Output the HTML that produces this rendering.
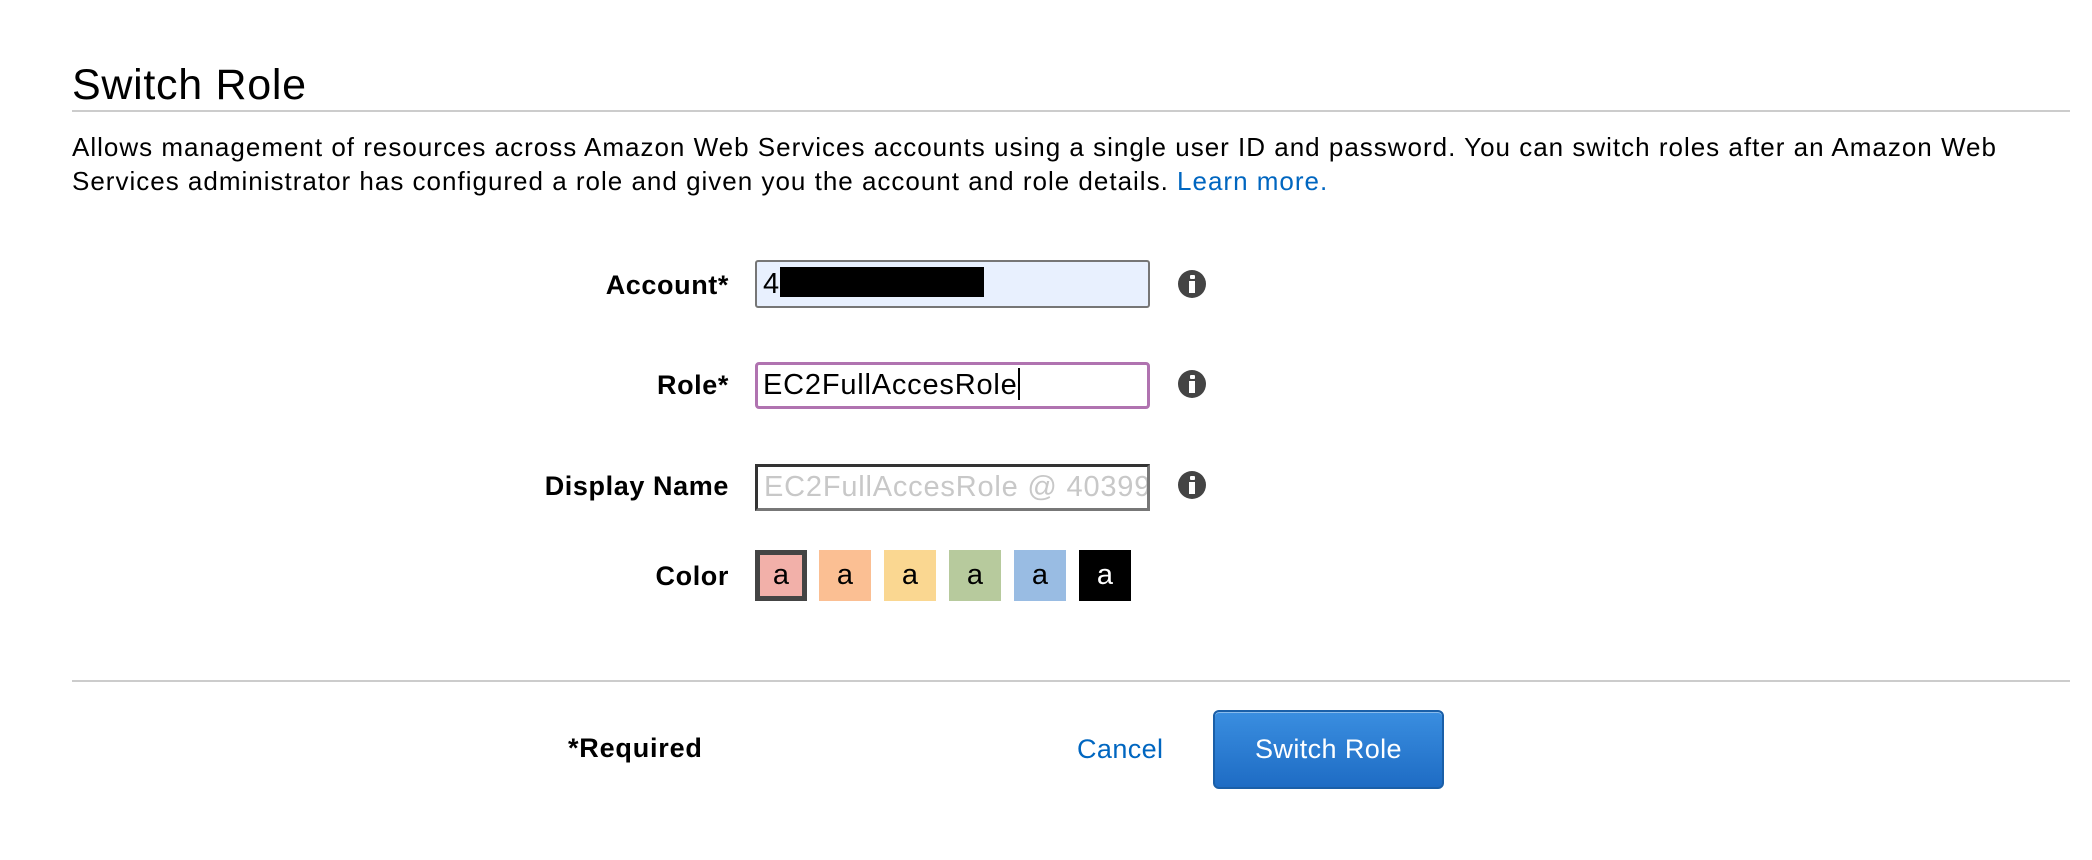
<!DOCTYPE html>
<html><head><meta charset="utf-8">
<style>
body{margin:0;width:2092px;height:860px;background:#fff;font-family:"Liberation Sans",Arial,sans-serif;position:relative;overflow:hidden;color:#000}
.a{position:absolute}
h1{position:absolute;left:72px;top:60px;margin:0;font-size:43px;font-weight:normal;line-height:50px;letter-spacing:0.7px}
.hr{position:absolute;left:72px;width:1998px;height:2px;background:#ccc}
p{position:absolute;left:72px;top:131px;margin:0;font-size:26px;line-height:33.5px;width:2020px;letter-spacing:1px}
p a{color:#0066c0;text-decoration:none}
.lbl{position:absolute;right:1363px;font-size:27px;font-weight:bold;line-height:30px;white-space:nowrap;letter-spacing:0.6px}
.inp{position:absolute;left:755px;width:395px;box-sizing:border-box;font-size:29px;padding-left:6px;overflow:hidden;white-space:nowrap;letter-spacing:0.8px}
.info{position:absolute;left:1178px;width:28px;height:28px;border-radius:50%;background:#444}
.info:before{content:"";position:absolute;left:12px;top:5px;width:5px;height:4px;background:#fff;border-radius:1px}
.info:after{content:"";position:absolute;left:11px;top:11px;width:6px;height:12px;background:#fff}
.sw{position:absolute;top:550px;width:52px;height:51px;font-size:29px;text-align:center;line-height:50px;box-sizing:border-box}
</style></head><body>
<h1>Switch Role</h1>
<div class="hr" style="top:110px"></div>
<p>Allows management of resources across Amazon Web Services accounts using a single user ID and password. You can switch roles after an Amazon Web Services administrator has configured a role and given you the account and role details. <a>Learn more.</a></p>

<div class="lbl" style="top:270px">Account*</div>
<div class="inp" style="top:260px;height:48px;background:#e8f0fe;border:2px solid #767676;border-radius:3px;line-height:44px">4<span style="display:inline-block;width:204px;height:30px;background:#000;vertical-align:-4px"></span></div>
<div class="info" style="top:270px"></div>

<div class="lbl" style="top:370px">Role*</div>
<div class="inp" style="top:362px;height:47px;border:3px solid #b073b0;border-radius:4px;line-height:41px;padding-left:5px">EC2FullAccesRole<span style="display:inline-block;width:2px;height:32px;background:#000;vertical-align:-6px"></span></div>
<div class="info" style="top:370px"></div>

<div class="lbl" style="top:471px">Display Name</div>
<div class="inp" style="top:464px;height:47px;border:3px solid #333;border-right-color:#777;border-bottom-color:#777;line-height:41px;color:#c8c8c8">EC2FullAccesRole @ 40399</div>
<div class="info" style="top:471px"></div>

<div class="lbl" style="top:561px">Color</div>
<div class="sw" style="left:755px;background:#f2b0a9;border:5px solid #444;line-height:41px">a</div>
<div class="sw" style="left:819px;background:#fbbf93">a</div>
<div class="sw" style="left:884px;background:#fad791">a</div>
<div class="sw" style="left:949px;background:#b7ca9d">a</div>
<div class="sw" style="left:1014px;background:#99bce3">a</div>
<div class="sw" style="left:1079px;background:#000;color:#fff">a</div>

<div class="hr" style="top:680px"></div>
<div class="a" style="left:568px;top:733px;font-size:27px;font-weight:bold;letter-spacing:0.8px">*Required</div>
<div class="a" style="left:1077px;top:734px;font-size:27px;color:#0066c0;letter-spacing:0.4px">Cancel</div>
<div class="a" style="left:1213px;top:710px;width:231px;height:79px;box-sizing:border-box;border:2px solid #1a5fa8;border-radius:6px;background:linear-gradient(#3a8ee0,#1e6cc4);box-shadow:inset 0 1px 0 rgba(255,255,255,.4);color:#fff;font-size:27px;text-align:center;line-height:75px;letter-spacing:0.4px">Switch Role</div>
</body></html>
